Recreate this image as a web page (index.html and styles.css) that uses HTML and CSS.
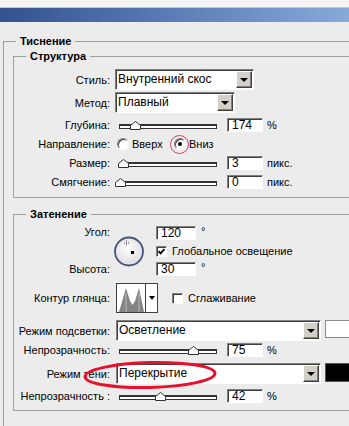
FILE: index.html
```html
<!DOCTYPE html>
<html lang="ru">
<head>
    <meta charset="UTF-8">
    <meta name="viewport" content="width=device-width, initial-scale=1.0">
    <title>Стиль слоя — Тиснение</title>
    <link rel="stylesheet" href="styles.css">
</head>
<body>

    <div class="window-top"></div>
    <div class="titlebar"></div>

    <fieldset class="group outer">
        <legend>Тиснение</legend>

        <!-- Структура -->
        <fieldset class="group structure">
            <legend>Структура</legend>

            <div class="row">
                <span class="label">Стиль:</span>
                <div class="select style-select"><span class="value">Внутренний скос</span><span class="arrow"></span></div>
            </div>

            <div class="row tight">
                <span class="label">Метод:</span>
                <div class="select method-select"><span class="value">Плавный</span><span class="arrow"></span></div>
            </div>

            <div class="row">
                <span class="label">Глубина:</span>
                <div class="slider">
                    <div class="track"></div>
                    <svg class="thumb" style="left: 16%" width="11" height="9" viewBox="0 0 11 9"><polygon points="0.5,8.5 0.5,4.5 5.5,0.5 10.5,4.5 10.5,8.5" fill="#fff" stroke="#333"/></svg>
                </div>
                <span class="input">174</span>
                <span class="unit">%</span>
            </div>

            <div class="row loose">
                <span class="label">Направление:</span>
                <div class="options">
                    <span class="opt"><span class="radio"></span>Вверх</span>
                    <span class="opt"><span class="radio checked"><span class="ring"></span></span>Вниз</span>
                </div>
            </div>

            <div class="row loose">
                <span class="label">Размер:</span>
                <div class="slider">
                    <div class="track"></div>
                    <svg class="thumb" style="left: 4%" width="11" height="9" viewBox="0 0 11 9"><polygon points="0.5,8.5 0.5,4.5 5.5,0.5 10.5,4.5 10.5,8.5" fill="#fff" stroke="#333"/></svg>
                </div>
                <span class="input">3</span>
                <span class="unit">пикс.</span>
            </div>

            <div class="row">
                <span class="label">Смягчение:</span>
                <div class="slider">
                    <div class="track"></div>
                    <svg class="thumb" style="left: 1%" width="11" height="9" viewBox="0 0 11 9"><polygon points="0.5,8.5 0.5,4.5 5.5,0.5 10.5,4.5 10.5,8.5" fill="#fff" stroke="#333"/></svg>
                </div>
                <span class="input">0</span>
                <span class="unit">пикс.</span>
            </div>
        </fieldset>

        <!-- Затенение -->
        <fieldset class="group shading">
            <legend>Затенение</legend>

            <div class="angle-block">
                <div class="angle-labels">
                    <span>Угол:</span>
                    <span>Высота:</span>
                </div>
                <svg class="dial" width="31" height="31" viewBox="0 0 31 31">
                    <defs>
                        <radialGradient id="dialFill" cx="45%" cy="40%" r="60%">
                            <stop offset="0" stop-color="#ffffff"/>
                            <stop offset="1" stop-color="#dcdcdc"/>
                        </radialGradient>
                    </defs>
                    <circle cx="15" cy="15.5" r="14" fill="url(#dialFill)" stroke="#46537c" stroke-width="1.8"/>
                    <path d="M12.5 4.5 V9.5 M10 7 H15" stroke="#555" stroke-width="1" stroke-dasharray="1 1"/>
                    <rect x="17" y="15" width="3" height="3" fill="#000"/>
                </svg>
                <div class="angle-fields">
                    <div class="field"><span class="input wide">120</span><span class="deg">°</span></div>
                    <div class="check-row">
                        <span class="checkbox"><svg width="7" height="7" viewBox="0 0 7 7"><path d="M0.5 3.2 L2.6 5.4 L6.5 1" fill="none" stroke="#000" stroke-width="1.8"/></svg></span>
                        Глобальное освещение
                    </div>
                    <div class="field"><span class="input wide">30</span><span class="deg">°</span></div>
                </div>
            </div>

            <div class="row spaced">
                <span class="label">Контур глянца:</span>
                <div class="contour">
                    <svg width="28" height="28" viewBox="0 0 28 28">
                        <path d="M2 28 L9 4 L13 17 L15.5 21 L18 17 L22 4 L27 28 Z" fill="#848484"/>
                        <path d="M9 9 V28 M22 9 V28" stroke="#b8b8b8" stroke-width="1"/>
                    </svg>
                    <span class="contour-arrow"></span>
                </div>
                <div class="check-row gloss-check">
                    <span class="checkbox"></span>
                    Сглаживание
                </div>
            </div>

            <div class="row spaced">
                <span class="label">Режим подсветки:</span>
                <div class="select mode-select"><span class="value">Осветление</span><span class="arrow"></span></div>
                <span class="swatch"></span>
            </div>

            <div class="row tight">
                <span class="label">Непрозрачность:</span>
                <div class="slider">
                    <div class="track"></div>
                    <svg class="thumb" style="left: 75%" width="11" height="9" viewBox="0 0 11 9"><polygon points="0.5,8.5 0.5,4.5 5.5,0.5 10.5,4.5 10.5,8.5" fill="#fff" stroke="#333"/></svg>
                </div>
                <span class="input">75</span>
                <span class="unit">%</span>
            </div>

            <div class="row loose shadow-row">
                <span class="label">Режим тени:</span>
                <div class="select mode-select"><span class="value">Перекрытие</span><span class="arrow"></span></div>
                <span class="swatch black"></span>
                <svg class="mark" width="140" height="34" viewBox="0 0 140 34">
                    <ellipse cx="69" cy="16" rx="65" ry="12.5" transform="rotate(-1.5 69 16)" fill="none" stroke="#e8112d" stroke-width="3"/>
                </svg>
            </div>

            <div class="row">
                <span class="label">Непрозрачность :</span>
                <div class="slider">
                    <div class="track"></div>
                    <svg class="thumb" style="left: 42%" width="11" height="9" viewBox="0 0 11 9"><polygon points="0.5,8.5 0.5,4.5 5.5,0.5 10.5,4.5 10.5,8.5" fill="#fff" stroke="#333"/></svg>
                </div>
                <span class="input">42</span>
                <span class="unit">%</span>
            </div>
        </fieldset>
    </fieldset>

</body>
</html>
```

FILE: styles.css
```css
body {
    margin: 0;
    width: 349px;
    height: 426px;
    overflow: hidden;
    background-color: #ececec;
    font-family: "Liberation Sans", Arial, sans-serif;
    font-size: 11px;
    color: #000;
}
.window-top {
    height: 7px;
    background-color: #f4f4f4;
    border-bottom: 1px solid #c4c4c4;
}
.titlebar {
    height: 14px;
    background: linear-gradient(to right, #34528d 0%, #5679b3 45%, #88aad9 100%);
}

/* group boxes */
fieldset.group {
    margin: 0;
    padding: 0 0 8px 10px;
    border: 1px solid #a0a0a0;
    min-width: 0;
}
.group legend {
    font-weight: bold;
    line-height: 13px;
    padding: 0 4px;
    margin-left: 2px;
}
fieldset.outer {
    width: 400px;
    margin: 13px 0 0 3px;
    padding: 2px 0 40px 9px;
}
.outer > legend {
    margin-left: 3px;
}
fieldset.structure {
    padding-top: 6px;
}
fieldset.shading {
    margin-top: 10px;
    padding-top: 5px;
    padding-bottom: 7px;
}

/* rows */
.row {
    display: flex;
    align-items: center;
    margin-top: 5px;
}
.structure > .row:first-of-type {
    margin-top: 0;
}
.row.tight { margin-top: 2px; }
.row.loose { margin-top: 6px; }
.row.spaced { margin-top: 7px; }
.label {
    flex: none;
    width: 86px;
    margin-right: 5px;
    display: flex;
    justify-content: flex-end;
    white-space: nowrap;
}

/* dropdowns */
.select {
    flex: none;
    display: flex;
    box-sizing: border-box;
    height: 21px;
    padding: 1px 1px 1px 2px;
    background-color: #fff;
    border: 1px solid;
    border-color: #808080 #fff #fff #808080;
    box-shadow: inset 1px 1px 0 #404040;
    font-size: 12px;
}
.select .value {
    flex: 1;
    line-height: 17px;
    white-space: nowrap;
}
.select .arrow {
    width: 16px;
    box-sizing: border-box;
    display: flex;
    align-items: center;
    justify-content: center;
    background-color: #d4d0c8;
    border: 1px solid;
    border-color: #fff #404040 #404040 #fff;
    box-shadow: inset -1px -1px 0 #808080;
}
.select .arrow::after {
    content: "";
    border-left: 4px solid transparent;
    border-right: 4px solid transparent;
    border-top: 4px solid #000;
}
.style-select { width: 139px; }
.method-select { width: 120px; }
.mode-select { width: 205px; margin-left: 1px; }

/* number fields */
.input {
    flex: none;
    box-sizing: border-box;
    width: 36px;
    height: 14px;
    padding-left: 4px;
    background-color: #fff;
    border: 1px solid;
    border-color: #808080 #fff #fff #808080;
    box-shadow: inset 1px 1px 0 #404040;
    font-size: 12px;
    line-height: 12px;
}
.input.wide { width: 40px; }
.unit { margin-left: 4px; }
.deg {
    align-self: flex-start;
    margin-left: 5px;
    line-height: 11px;
}

/* sliders */
.slider {
    position: relative;
    flex: none;
    width: 98px;
    height: 9px;
    margin: 0 10px 0 4px;
}
.slider .track {
    box-sizing: border-box;
    height: 5px;
    margin-top: 3px;
    background-color: #fff;
    border: 1px solid #333;
    border-top-width: 2px;
}
.slider .thumb {
    position: absolute;
    top: 0;
    margin-left: -5px;
}

/* radio and check */
.options {
    display: flex;
    margin-left: 2px;
}
.opt {
    display: flex;
    align-items: center;
    gap: 3px;
}
.opt:first-child { width: 57px; }
.radio {
    position: relative;
    box-sizing: border-box;
    width: 12px;
    height: 12px;
    border-radius: 50%;
    background-color: #fff;
    border: 1px solid;
    border-color: #808080 #fff #fff #808080;
    box-shadow: inset 1px 1px 0 #404040;
}
.radio.checked::after {
    content: "";
    position: absolute;
    left: 3px;
    top: 3px;
    width: 4px;
    height: 4px;
    border-radius: 50%;
    background-color: #000;
}
.ring {
    position: absolute;
    left: -5px;
    top: -4px;
    width: 17px;
    height: 17px;
    border: 1.5px solid #e63a5c;
    border-radius: 50%;
}
.check-row {
    display: flex;
    align-items: center;
    gap: 5px;
    white-space: nowrap;
}
.checkbox {
    flex: none;
    box-sizing: border-box;
    width: 11px;
    height: 11px;
    display: flex;
    align-items: center;
    justify-content: center;
    background-color: #fff;
    border: 1px solid;
    border-color: #808080 #fff #fff #808080;
    box-shadow: inset 1px 1px 0 #404040;
}

/* angle / altitude */
.angle-block {
    display: flex;
    height: 50px;
}
.angle-labels {
    flex: none;
    width: 86px;
    margin-right: 4px;
    display: flex;
    flex-direction: column;
    justify-content: space-between;
    align-items: flex-end;
    line-height: 13px;
}
.dial {
    flex: none;
    margin-top: 10px;
}
.angle-fields {
    margin-left: 11px;
    display: flex;
    flex-direction: column;
    justify-content: space-between;
}
.field {
    display: flex;
}

/* gloss contour */
.contour {
    flex: none;
    display: flex;
    box-sizing: border-box;
    width: 42px;
    height: 30px;
    margin-left: 1px;
    background-color: #fff;
    border: 1px solid #404040;
}
.contour svg {
    display: block;
}
.contour-arrow {
    flex: 1;
    display: flex;
    align-items: center;
    justify-content: center;
    border-left: 1px solid #404040;
}
.contour-arrow::after {
    content: "";
    border-left: 3px solid transparent;
    border-right: 3px solid transparent;
    border-top: 4px solid #000;
}
.gloss-check {
    margin-left: 14px;
}

/* colour swatches */
.swatch {
    flex: none;
    align-self: flex-start;
    box-sizing: border-box;
    width: 30px;
    height: 18px;
    margin-left: 4px;
    background-color: #fff;
    border: 1px solid #8a8a8a;
}
.swatch.black {
    height: 19px;
    background-color: #000;
    border-color: #555;
}

/* red annotation */
.shadow-row {
    position: relative;
}
.mark {
    position: absolute;
    left: 57px;
    top: -4px;
}
```
